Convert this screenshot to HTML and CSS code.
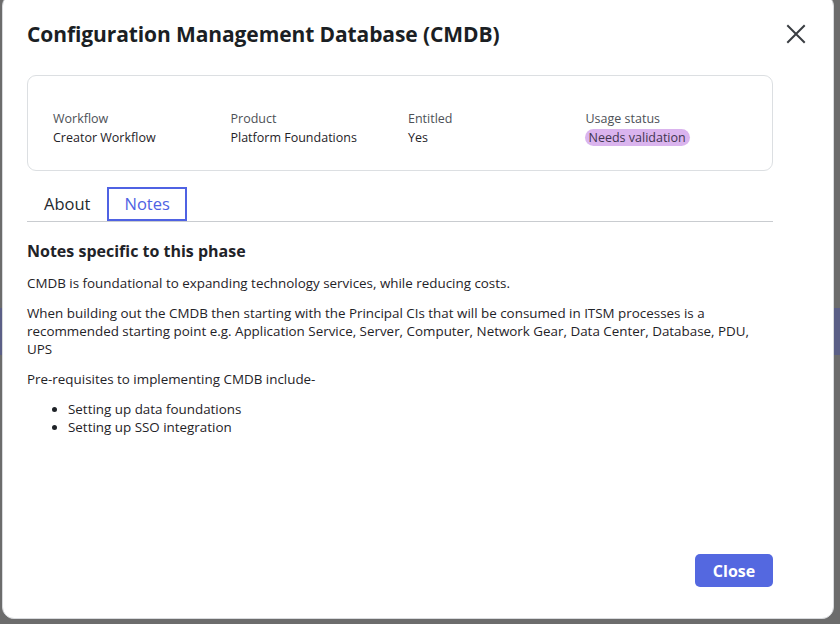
FILE: index.html
```html
<!DOCTYPE html>
<html>
<head>
<meta charset="utf-8">
<link rel="stylesheet" href="styles.css">
</head>
<body>
<div class="backdrop">
  <div class="bg-band"></div>
  <div class="modal">
    <div class="modal-header">
      <h1 class="modal-title">Configuration Management Database (CMDB)</h1>
      <button class="icon-close" aria-label="Close">
        <svg width="20" height="20" viewBox="0 0 20 20"><path d="M2 2 L18 18 M18 2 L2 18" stroke="#3a3d42" stroke-width="2" stroke-linecap="square" fill="none"/></svg>
      </button>
    </div>
    <div class="info-card">
      <div class="info-item">
        <div class="info-label">Workflow</div>
        <div class="info-value">Creator Workflow</div>
      </div>
      <div class="info-item">
        <div class="info-label">Product</div>
        <div class="info-value">Platform Foundations</div>
      </div>
      <div class="info-item">
        <div class="info-label">Entitled</div>
        <div class="info-value">Yes</div>
      </div>
      <div class="info-item">
        <div class="info-label">Usage status</div>
        <div class="info-value"><span class="badge">Needs validation</span></div>
      </div>
    </div>
    <div class="tabs">
      <div class="tab">About</div>
      <div class="tab tab-active">Notes</div>
    </div>
    <div class="notes">
      <h2 class="notes-title">Notes specific to this phase</h2>
      <p>CMDB is foundational to expanding technology services, while reducing costs.</p>
      <p>When building out the CMDB then starting with the Principal CIs that will be consumed in ITSM processes is a recommended starting point e.g. Application Service, Server, Computer, Network Gear, Data Center, Database, PDU, UPS</p>
      <p>Pre-requisites to implementing CMDB include-</p>
      <ul>
        <li>Setting up data foundations</li>
        <li>Setting up SSO integration</li>
      </ul>
    </div>
    <div class="footer">
      <button class="btn-primary">Close</button>
    </div>
  </div>
</div>
</body>
</html>
```

FILE: styles.css
```css
* { box-sizing: border-box; }
html, body { margin: 0; padding: 0; }
body {
  background: #6c6c6c;
  font-family: "Open Sans", "Liberation Sans", sans-serif;
  color: #1f2328;
  overflow: hidden;
}
.backdrop {
  position: relative;
  width: 840px;
  height: 624px;
  overflow: hidden;
}
.bg-band {
  position: absolute;
  left: 0;
  top: 308px;
  width: 840px;
  height: 47px;
  background: #5b5f86;
}
.modal {
  position: absolute;
  left: 2px;
  top: -6px;
  width: 832px;
  height: 625px;
  background: #fff;
  border: 1px solid #d8dadd;
  border-radius: 12px;
  padding: 0 60px 0 24px;
  display: flex;
  flex-direction: column;
}
.modal-header {
  display: flex;
  align-items: center;
  justify-content: space-between;
  height: 80px;
  padding-bottom: 2px;
}
.modal-title {
  margin: 0;
  font-size: 21px;
  font-weight: 700;
  color: #1b1f24;
  letter-spacing: -0.1px;
}
.icon-close {
  border: 0;
  background: none;
  padding: 0;
  margin-right: -33px;
  width: 20px;
  height: 20px;
  display: flex;
}
.info-card {
  height: 96px;
  border: 1px solid #dcdfe2;
  border-radius: 9px;
  padding: 33px 0 0 25px;
  display: grid;
  grid-template-columns: repeat(4, 177.5px);
  font-size: 12.5px;
  line-height: 19px;
}
.info-label { color: #4d5157; }
.info-value { color: #1f2328; }
.badge {
  display: inline-block;
  background: #dab4ee;
  color: #3f3550;
  border-radius: 9px;
  padding: 0 4px;
  line-height: 17px;
  margin-left: -1px;
}
.tabs {
  display: flex;
  align-items: flex-end;
  margin-top: 16px;
  border-bottom: 1px solid #c9ccd0;
  height: 35px;
}
.tab {
  font-size: 16.5px;
  line-height: 30px;
  padding: 0 15px;
  color: #25292e;
  height: 34px;
  border: 2px solid transparent;
}
.tab-active {
  color: #4f62e3;
  border-color: #4f62e3;
}
.notes {
  padding-top: 18px;
  font-size: 13.4px;
  line-height: 18px;
  color: #1f2328;
}
.notes-title {
  margin: 0 0 12px;
  font-size: 16px;
  line-height: 22px;
  font-weight: 700;
}
.notes p { margin: 0 0 12px; }
.notes ul { margin: 0; padding-left: 41px; }
.footer {
  margin-top: auto;
  display: flex;
  justify-content: flex-end;
  padding-bottom: 31px;
}
.btn-primary {
  background: #5468e0;
  color: #fff;
  border: 0;
  border-radius: 5px;
  width: 78px;
  height: 33px;
  font-family: "Open Sans", "Liberation Sans", sans-serif;
  font-size: 16px;
  font-weight: 700;
}
```
